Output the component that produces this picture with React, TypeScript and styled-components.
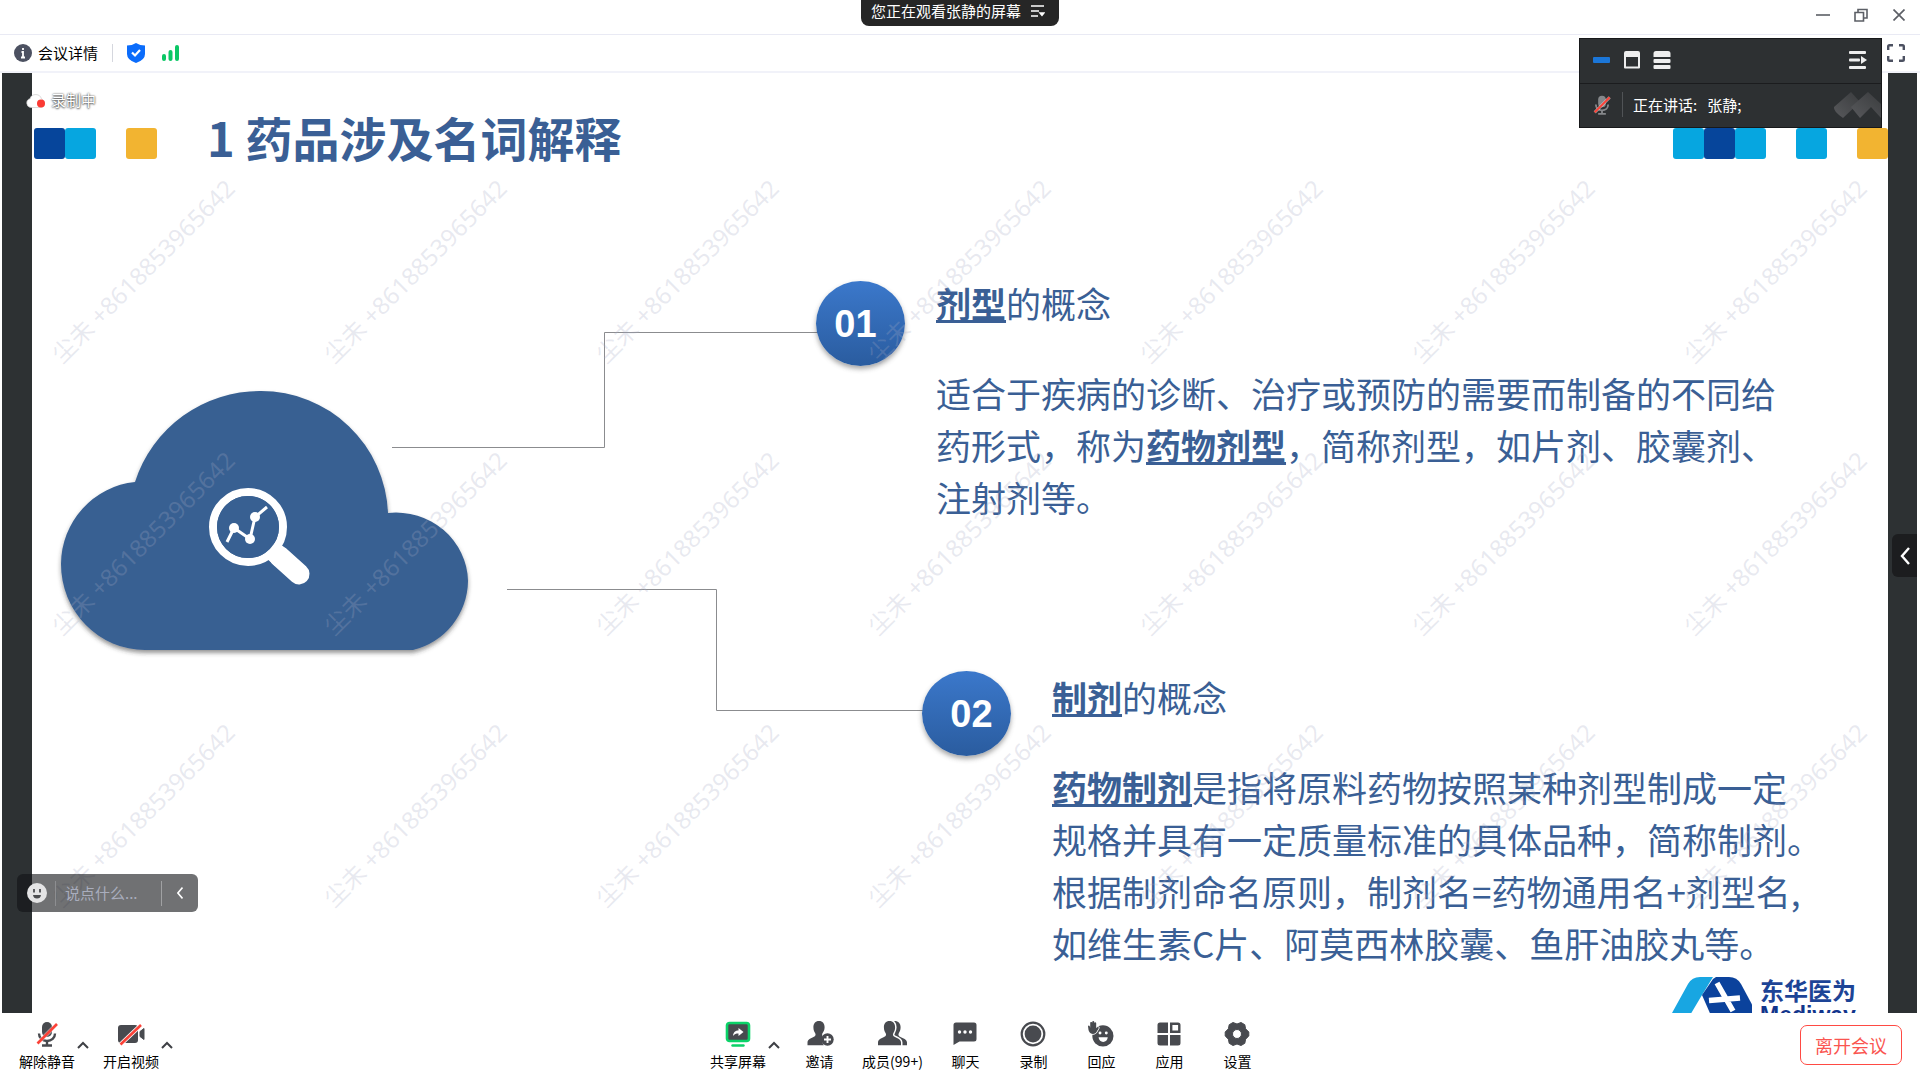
import React from "react";
import styled, { createGlobalStyle } from "styled-components";

const GlobalStyle = createGlobalStyle`
  *, *::before, *::after { box-sizing: border-box; }
  html, body { margin: 0; padding: 0; }
  body {
    background: #fff;
    color: #000;
    font-family: "Noto Sans CJK SC", "Open Sans", sans-serif;
    font-size: 15px;
    line-height: 20px;
  }
  h1, h2, p { margin: 0; }
  button, input { font: inherit; }
  svg { display: block; flex: none; }
`;

/* ---------- shell ---------- */

const Page = styled.div`
  position: relative;
  display: flex;
  flex-direction: column;
  height: 100vh;
  overflow: hidden;
`;

const PlainButton = styled.button`
  display: inline-flex;
  align-items: center;
  justify-content: center;
  padding: 0;
  border: 0;
  background: none;
  color: inherit;
  cursor: pointer;
`;

const TitleBar = styled.header`
  display: grid;
  grid-template-columns: 1fr auto 1fr;
  height: 35px;
  flex: none;
  border-bottom: 1px solid #e9eaf4;
`;

const WatchingTab = styled.button`
  grid-column: 2;
  display: flex;
  align-items: center;
  gap: 10px;
  height: 26px;
  padding: 0 14px 4px 10px;
  border: 0;
  border-radius: 0 0 8px 8px;
  background: #262626;
  color: #fff;
  cursor: pointer;
`;

const WindowControls = styled.div`
  display: flex;
  justify-content: flex-end;
  padding-right: 2px;
  color: #5c5f66;
`;

const WindowButton = styled(PlainButton)`
  width: 38px;
  height: 30px;
`;

const InfoBar = styled.div`
  display: flex;
  align-items: center;
  height: 38px;
  flex: none;
  padding: 0 15px 0 14px;
  border-bottom: 2px solid #f1f2f9;
`;

const DetailsButton = styled(PlainButton)`
  gap: 6px;
`;

const Rule = styled.span<{ $h: number; $color: string }>`
  width: 1px;
  height: ${(p) => p.$h}px;
  background: ${(p) => p.$color};
  flex: none;
`;

const StatusIcons = styled.div`
  display: flex;
  align-items: center;
  gap: 17px;
  margin-left: 14px;
`;

const InfoRule = styled(Rule)`
  margin-left: 14px;
`;

const FullscreenButton = styled(PlainButton)`
  margin-left: auto;
`;

/* ---------- shared screen ---------- */

const Stage = styled.main`
  position: relative;
  flex: 1;
  min-height: 0;
  margin: 0 3px 0 2px;
  padding: 0 29px 0 30px;
  overflow: hidden;
  background: #2d3133;
`;

const Slide = styled.section`
  min-height: 100%;
  background: #fff;
  color: #3a5f95;
`;

const SlideHeader = styled.div`
  display: flex;
  align-items: center;
  padding: 35px 0 0 2px;
  height: 105px;
`;

const Squares = styled.div`
  display: flex;
`;

const Square = styled.span<{ $color: string }>`
  width: 31px;
  height: 31px;
  border-radius: 3px;
  background: ${(p) => p.$color};
`;

const SquareGap = styled.span`
  width: 30px;
`;

const SlideTitle = styled.h1`
  flex: 1;
  padding: 0 0 13px 50px;
  font-size: 47px;
  line-height: 56px;
  font-weight: 700;
`;

const Diagram = styled.div`
  position: relative;
  padding-top: 99px;
`;

const DiagramArt = styled.svg`
  position: absolute;
  left: 0;
  top: 0;
`;

const Concept = styled.article<{ $indent: number; $gap: number; $after: number }>`
  position: relative;
  display: flex;
  align-items: flex-start;
  gap: ${(p) => p.$gap}px;
  margin: 0 0 ${(p) => p.$after}px ${(p) => p.$indent}px;
`;

const NumberBadge = styled.span<{ $shift: number; $drop: number }>`
  display: flex;
  align-items: center;
  justify-content: center;
  flex: none;
  width: 89px;
  height: 85px;
  margin-top: ${(p) => p.$drop}px;
  padding-right: ${(p) => Math.max(0, -p.$shift)}px;
  padding-left: ${(p) => Math.max(0, p.$shift)}px;
  border-radius: 50%;
  background: linear-gradient(#3b78cb, #2a5c9f);
  box-shadow: 0 3px 5px rgba(60, 60, 60, 0.45);
  color: #fff;
  font: 700 38px/40px "Liberation Sans", Arial, sans-serif;
`;

const ConceptText = styled.div`
  font-size: 35px;
  line-height: 52px;
  white-space: nowrap;
`;

const ConceptTitle = styled.h2`
  margin-bottom: 38px;
  font: inherit;
`;

const Line = styled.span`
  display: block;
`;

const Term = styled.strong`
  font-weight: 700;
  text-decoration: underline;
  text-decoration-thickness: 3px;
  text-underline-offset: 2px;
  text-decoration-skip-ink: none;
`;

const SlideFooter = styled.div`
  display: flex;
  justify-content: flex-end;
  gap: 8px;
  padding: 6px 32px 0 0;
`;

const BrandLogo = styled.svg`
  margin-top: 2px;
`;

const BrandName = styled.div`
  color: #1d4496;
  font-size: 24px;
  line-height: 30px;
  font-weight: 700;
`;

const BrandLatin = styled.div`
  color: #12358c;
  font: 700 23px/20px "Liberation Sans", Arial, sans-serif;
`;

const Watermarks = styled.div`
  position: absolute;
  inset: 62px 0 0 5px;
  display: grid;
  grid-template-columns: repeat(auto-fill, 272px);
  grid-auto-rows: 272px;
  overflow: hidden;
  pointer-events: none;
`;

const Watermark = styled.span`
  display: flex;
  align-items: center;
  justify-content: center;
  transform: rotate(-45deg);
  color: rgba(165, 170, 195, 0.26);
  font: 400 24px/32px "Noto Sans", "Noto Sans CJK SC", sans-serif;
  white-space: nowrap;
`;

const Recording = styled.div`
  position: absolute;
  left: 24px;
  top: 17px;
  display: flex;
  align-items: center;
  gap: 6px;
  color: #fff;
  text-shadow: 0 0 2px rgba(0, 0, 0, 0.8), 0 1px 2px rgba(0, 0, 0, 0.5);
`;

const CommentBar = styled.div`
  position: absolute;
  left: 15px;
  bottom: 101px;
  display: flex;
  align-items: center;
  width: 181px;
  height: 38px;
  padding-left: 10px;
  border-radius: 6px;
  background: rgba(17, 18, 21, 0.6);
  color: #fff;
`;

const CommentRule = styled(Rule)`
  margin-left: 8px;
`;

const CommentInput = styled.input`
  flex: 1;
  min-width: 0;
  padding: 0 0 0 9px;
  border: 0;
  outline: 0;
  background: none;
  color: #fff;
  &::placeholder { color: #a9adbd; opacity: 1; }
`;

const CollapseButton = styled(PlainButton)`
  width: 36px;
  height: 38px;
`;

const DrawerHandle = styled(PlainButton)`
  position: absolute;
  right: 0;
  top: 461px;
  width: 25px;
  height: 43px;
  border-radius: 6px 0 0 6px;
  background: #1c1d1f;
  color: #fff;
`;

/* ---------- speaker panel ---------- */

const SpeakerPanel = styled.aside`
  position: absolute;
  top: 38px;
  right: 38px;
  width: 303px;
  border: 1px solid #17181a;
  background: #2d3032;
  color: #fff;
`;

const PanelTools = styled.div`
  display: flex;
  align-items: center;
  gap: 12px;
  height: 45px;
  padding: 0 13px 2px;
  border-bottom: 1px solid #1b1c1e;
`;

const PanelMenu = styled(PlainButton)`
  margin-left: auto;
`;

const SpeakerRow = styled.div`
  display: flex;
  align-items: center;
  gap: 10px;
  height: 43px;
  padding: 0 0 2px 12px;
`;

const SpeakerText = styled.span`
  flex: 1;
  white-space: pre;
`;

/* ---------- toolbar ---------- */

const Toolbar = styled.footer`
  display: grid;
  grid-template-columns: 1fr auto 1fr;
  align-items: start;
  flex: none;
  height: 67px;
  padding: 8px 18px 0 19px;
`;

const ToolGroup = styled.div<{ $inset?: number }>`
  display: flex;
  gap: 14px;
  padding-left: ${(p) => p.$inset ?? 0}px;
`;

const ToolRow = styled.div`
  display: flex;
  gap: 17px;
`;

const ToolWithMenu = styled.div`
  display: flex;
  gap: 2px;
`;

const ToolButton = styled.button`
  display: flex;
  flex-direction: column;
  align-items: center;
  gap: 4px;
  min-width: 51px;
  padding: 0;
  border: 0;
  background: none;
  color: #000;
  font-size: 14px;
  line-height: 20px;
  white-space: nowrap;
  cursor: pointer;
`;

const CaretButton = styled(PlainButton)`
  width: 12px;
  height: 48px;
  color: #3e4045;
`;

const LeaveButton = styled.button`
  justify-self: end;
  width: 102px;
  height: 40px;
  margin-top: 4px;
  padding: 0;
  border: 1px solid #ff4a43;
  border-radius: 7px;
  background: #fff;
  color: #fa5550;
  font-size: 18px;
  line-height: 24px;
  cursor: pointer;
`;

/* ---------- icons ---------- */

const INK = "#484a4f";

const Caret = () => (
  <svg width="12" height="8" viewBox="0 0 12 8" fill="none" stroke="currentColor" strokeWidth="2">
    <path d="M1 7 6 2l5 5" />
  </svg>
);

const MicOff = ({ size = 26, color = INK }: { size?: number; color?: string }) => (
  <svg width={size} height={size} viewBox="0 0 26 26" fill="none">
    <rect x="8" y="1" width="10" height="15" rx="5" fill={color} />
    <path d="M5 12.500c0 4.500 3.500 7.500 8 7.500s8-3 8-7.500" stroke={color} strokeWidth="2.400" />
    <path d="M13 20v4M8 24.500h10" stroke={color} strokeWidth="2.400" />
    <path d="M3.500 22.500 23 3" stroke="#fff" strokeWidth="4" opacity=".5" />
    <path d="M3.500 22.500 23 3" stroke="#fb4238" strokeWidth="2.600" />
  </svg>
);

const CameraOff = () => (
  <svg width="28" height="26" viewBox="0 0 28 26" fill="none">
    <rect x="1" y="4" width="20" height="18" rx="3" fill={INK} />
    <path d="M23 10.500 27 7.500v11l-4-3z" fill={INK} stroke={INK} strokeLinejoin="round" />
    <path d="M3.500 23.500 24 4" stroke="#fff" strokeWidth="4.400" />
    <path d="M3.500 23.500 24 4" stroke="#fb4238" strokeWidth="2.600" />
  </svg>
);

const ShareScreen = () => (
  <svg width="26" height="26" viewBox="0 0 26 26" fill="none">
    <rect x="2" y="2" width="22" height="18" rx="2.500" fill={INK} stroke="#0bd268" strokeWidth="2.600" />
    <path d="M8 15c.4-4 2.400-5.500 5.500-5.500V7l5 4-5 4v-2.500c-2.500 0-4 .5-5.500 2.500Z" fill="#fff" />
    <path d="M7.500 24.500h11" stroke="#0bd268" strokeWidth="2.400" strokeLinecap="round" />
  </svg>
);

const Invite = () => (
  <svg width="28" height="26" viewBox="0 0 28 26">
    <path d="M13 0c3.700 0 5.600 2.700 5.600 6.200 0 2.800-1.200 4.600-2 5.800-.6 1-.6 2.500 0 3.300-1.200 3.200-.6 6.700 1.200 9H1.500v-2.800c0-3 3.500-4.400 6-5.500 2.200-1 2.500-2.200 1.600-4-.8-1.300-1.700-3-1.700-5.800C7.400 2.700 9.300 0 13 0Z" fill={INK} />
    <circle cx="21.500" cy="18.500" r="6.200" fill={INK} />
    <path d="M21.500 15v7M18 18.500h7" stroke="#fff" strokeWidth="1.900" />
  </svg>
);

const Members = () => (
  <svg width="30" height="26" viewBox="0 0 30 26">
    <path d="M16.500 0c4 0 6.100 2.700 6.100 6.200 0 2.800-1 4.500-1.700 5.800-.9 1.800-.6 3 1.600 4 2.500 1.100 6.500 2.500 6.500 5.500v2.800H16V0Z" fill={INK} />
    <path
      d="M11.500 0c3.700 0 5.600 2.700 5.600 6.200 0 2.800-1 4.500-1.700 5.800-.9 1.800-.6 3 1.600 4 2.500 1.100 6 2.500 6 5.500v2.800H0v-2.800c0-3 3.500-4.400 6-5.500 2.200-1 2.500-2.200 1.600-4C6.800 10.700 5.900 9 5.900 6.200 5.900 2.700 7.800 0 11.500 0Z"
      fill={INK}
      stroke="#fff"
      strokeWidth="3"
      paintOrder="stroke"
    />
  </svg>
);

const Chat = () => (
  <svg width="26" height="26" viewBox="0 0 26 26">
    <path d="M4 1.500h18a2.500 2.500 0 0 1 2.500 2.500v14a2.500 2.500 0 0 1-2.500 2.500H7.500L1.500 24V4A2.500 2.500 0 0 1 4 1.500Z" fill={INK} />
    <g fill="#fff"><circle cx="7.500" cy="11" r="1.700" /><circle cx="13" cy="11" r="1.700" /><circle cx="18.500" cy="11" r="1.700" /></g>
  </svg>
);

const Record = () => (
  <svg width="26" height="26" viewBox="0 0 26 26">
    <circle cx="13" cy="13" r="11.300" fill="#fff" stroke={INK} strokeWidth="2.200" />
    <circle cx="13" cy="13" r="8.400" fill={INK} />
  </svg>
);

const Wave = () => (
  <svg width="28" height="26" viewBox="0 0 28 27">
    <circle cx="16" cy="15.500" r="11" fill={INK} />
    <path d="M.5 5.500c0-1 1.300-1.200 1.700-.2L2.800 7V2c0-1.300 2-1.300 2.100 0V.900C5.100-.2 6.800-.2 7 .900V2c.2-1.100 1.900-1.100 2 .1v5.500c.8-1.200 1.700-1.600 2.400-1.200.6.400.4 1-.1 1.700-1.600 2.600-2.200 5.400-5.600 5.400C2.500 13.500 1.500 11 1 9.200Z" fill={INK} stroke="#fff" strokeWidth="1.600" paintOrder="stroke" />
    <g fill="#fff"><circle cx="13" cy="12.500" r="1.500" /><circle cx="19.500" cy="12.500" r="1.500" /></g>
    <path d="M11.500 17h9.500c-.3 3.200-2.200 4.800-4.700 4.800s-4.500-1.600-4.800-4.800Z" fill="#fff" />
  </svg>
);

const Apps = () => (
  <svg width="26" height="26" viewBox="0 0 26 26" fill={INK}>
    <path d="M4 1.500h8v10.500H1.500V4A2.500 2.500 0 0 1 4 1.500ZM1.500 14H12v10.500H4A2.500 2.500 0 0 1 1.500 22ZM14 14h10.500v8a2.500 2.500 0 0 1-2.500 2.500h-8Z" />
    <path d="M15.200 2.700h6.800a1.300 1.300 0 0 1 1.300 1.300v6.800h-8.100Z" fill="none" stroke={INK} strokeWidth="2.400" />
  </svg>
);

const Settings = () => (
  <svg width="26" height="26" viewBox="0 0 26 26">
    <path
      fill={INK}
      fillRule="evenodd"
      d="M9 1.500 13 3l4-1.500 3.800 2.200.8 4.100L24.800 11v4l-3.200 3.200-.8 4.100-3.800 2.200L13 23l-4 1.500-3.800-2.200-.8-4.100L1.200 15v-4l3.200-3.200.8-4.100ZM13 8.500a4.500 4.500 0 1 0 0 9 4.500 4.500 0 0 0 0-9Z"
      stroke={INK}
      strokeLinejoin="round"
    />
  </svg>
);

const CloudArt = () => (
  <DiagramArt width="900" height="560" viewBox="32 178 900 560" fill="none" aria-hidden="true">
    <defs>
      <filter id="cloudShadow" x="-5%" y="-5%" width="110%" height="115%">
        <feDropShadow dx="0" dy="3" stdDeviation="2" floodColor="#333" floodOpacity=".5" />
      </filter>
    </defs>
    <path
      d="M145 650A84 86 0 0 1 61 564A82 83 0 0 1 135 482A131 131 0 0 1 261 391A127 127 0 0 1 388 513A72 70 0 0 1 468 581A72 72 0 0 1 413 650Z"
      fill="#386092"
      filter="url(#cloudShadow)"
    />
    <circle cx="248" cy="527" r="35" stroke="#fff" strokeWidth="8" />
    <path d="m279 556 20 18" stroke="#fff" strokeWidth="21" strokeLinecap="round" />
    <path d="m270 548 12 11" stroke="#fff" strokeWidth="20" />
    <circle cx="248" cy="527" r="31" fill="#386092" />
    <path d="m227 542 7-14 16 11 5-22 12-10" stroke="#fff" strokeWidth="3" />
    <g fill="#fff"><circle cx="234" cy="528" r="5" /><circle cx="250" cy="539" r="5" /><circle cx="255" cy="517" r="5" /></g>
    <path d="M392 447.500H604.500V332.500H820M507 589.500H716.500V710.500H926" stroke="#8b8c8f" />
  </DiagramArt>
);

const BrandMark = () => (
  <BrandLogo width="81" height="50" viewBox="0 0 81 50">
    <path d="M1 36 17 7Q21 0 29 0h13L31 18 12 50H-7Z" fill="#18a6e2" />
    <path d="M45 0h13q8 0 12 7l23 43H45L31 18 42 2Z" fill="#0b429c" />
    <path d="M46 6 62 34M38 23.500 69 21" stroke="#fff" strokeWidth="5.500" fill="none" />
  </BrandLogo>
);

const tools = [
  { label: "邀请", icon: <Invite /> },
  { label: "成员(99+)", icon: <Members /> },
  { label: "聊天", icon: <Chat /> },
  { label: "录制", icon: <Record /> },
  { label: "回应", icon: <Wave /> },
  { label: "应用", icon: <Apps /> },
  { label: "设置", icon: <Settings /> },
];

const NAVY = "#06459b";
const CYAN = "#06a6e0";
const AMBER = "#f2b431";

export default function App() {
  return (
    <Page>
      <GlobalStyle />

      <TitleBar>
        <WatchingTab>
          您正在观看张静的屏幕
          <svg width="14" height="12" viewBox="0 0 14 12" fill="none" stroke="#fff" strokeWidth="1.400">
            <path d="M0 1h13M0 6h8M0 11h7" />
            <path d="m9 8 2 2.500L13 8Z" fill="#fff" />
          </svg>
        </WatchingTab>
        <WindowControls>
          <WindowButton aria-label="最小化">
            <svg width="14" height="14" viewBox="0 0 14 14" stroke="currentColor" strokeWidth="1.600"><path d="M0 7h14" /></svg>
          </WindowButton>
          <WindowButton aria-label="还原">
            <svg width="14" height="14" viewBox="0 0 14 14" fill="none" stroke="currentColor" strokeWidth="1.600">
              <path d="M1 4.500h8.500V13H1ZM4 4.500V1.500h9V10H9.500" />
            </svg>
          </WindowButton>
          <WindowButton aria-label="关闭">
            <svg width="12" height="12" viewBox="0 0 12 12" stroke="currentColor" strokeWidth="1.700"><path d="m.5.5 11 11m0-11-11 11" /></svg>
          </WindowButton>
        </WindowControls>
      </TitleBar>

      <InfoBar>
        <DetailsButton>
          <svg width="18" height="18" viewBox="0 0 18 18">
            <circle cx="9" cy="9" r="9" fill="#4c5161" />
            <path d="M9 4v2M7.500 8H9v5.500M7 13.500h4" stroke="#fff" strokeWidth="1.800" fill="none" />
          </svg>
          会议详情
        </DetailsButton>
        <InfoRule $h={18} $color="#d5d7de" />
        <StatusIcons>
          <svg width="18" height="20" viewBox="0 0 18 20">
            <path d="M9 0q4 2.500 9 2.500V11q0 6-9 9-9-3-9-9V2.500Q5 2.500 9 0Z" fill="#0b6cfb" />
            <path d="m5 9.500 3 3 5-5.500" stroke="#fff" strokeWidth="2.200" fill="none" />
          </svg>
          <svg width="17" height="16" viewBox="0 0 17 16" stroke="#0bc765" strokeWidth="4" strokeLinecap="round">
            <path d="M2 11v3M8.500 7v7M15 2v12" />
          </svg>
        </StatusIcons>
        <FullscreenButton aria-label="全屏">
          <svg width="18" height="18" viewBox="0 0 18 18" fill="none" stroke="#4c5161" strokeWidth="2.400">
            <path d="M1.200 6V2.500q0-1.300 1.300-1.300H6M12 1.200h3.500q1.300 0 1.300 1.300V6M16.800 12v3.500q0 1.300-1.300 1.300H12M6 16.800H2.500q-1.300 0-1.300-1.300V12" />
          </svg>
        </FullscreenButton>
      </InfoBar>

      <Stage>
        <Slide>
          <SlideHeader>
            <Squares>
              <Square $color={NAVY} />
              <Square $color={CYAN} />
              <SquareGap />
              <Square $color={AMBER} />
            </Squares>
            <SlideTitle>1 药品涉及名词解释</SlideTitle>
            <Squares>
              <Square $color={CYAN} />
              <Square $color={NAVY} />
              <Square $color={CYAN} />
              <SquareGap />
              <Square $color={CYAN} />
              <SquareGap />
              <Square $color={AMBER} />
            </Squares>
          </SlideHeader>

          <Diagram>
            <CloudArt />
            <Concept $indent={784} $gap={31} $after={148}>
              <NumberBadge $shift={-10} $drop={4}>01</NumberBadge>
              <ConceptText>
                <ConceptTitle><Term>剂型</Term>的概念</ConceptTitle>
                <p>
                  <Line>适合于疾病的诊断、治疗或预防的需要而制备的不同给</Line>
                  <Line>药形式，称为<Term>药物剂型</Term>，简称剂型，如片剂、胶囊剂、</Line>
                  <Line>注射剂等。</Line>
                </p>
              </ConceptText>
            </Concept>
            <Concept $indent={890} $gap={41} $after={0}>
              <NumberBadge $shift={10} $drop={0}>02</NumberBadge>
              <ConceptText>
                <ConceptTitle><Term>制剂</Term>的概念</ConceptTitle>
                <p>
                  <Line><Term>药物制剂</Term>是指将原料药物按照某种剂型制成一定</Line>
                  <Line>规格并具有一定质量标准的具体品种，简称制剂。</Line>
                  <Line>根据制剂命名原则，制剂名=药物通用名+剂型名,</Line>
                  <Line>如维生素C片、阿莫西林胶囊、鱼肝油胶丸等。</Line>
                </p>
              </ConceptText>
            </Concept>
          </Diagram>

          <SlideFooter>
            <BrandMark />
            <div>
              <BrandName>东华医为</BrandName>
              <BrandLatin>Mediway</BrandLatin>
            </div>
          </SlideFooter>
        </Slide>

        <Watermarks>
          {Array.from({ length: 21 }, (_, i) => (
            <Watermark key={i}>尘未 +8618853965642</Watermark>
          ))}
        </Watermarks>

        <Recording>
          <svg width="19" height="17" viewBox="0 0 19 17">
            <path d="M5 15.500a4.500 4.500 0 0 1-1-8.800A6 6 0 0 1 15.500 7c2 .8 3 2.300 3 4.300s-1.500 4.200-4 4.200Z" fill="#fff" stroke="#ccc" strokeWidth=".7" />
            <circle cx="15" cy="11.500" r="4" fill="#fb3b34" />
          </svg>
          录制中
        </Recording>

        <CommentBar>
          <PlainButton aria-label="表情">
            <svg width="20" height="20" viewBox="0 0 20 20">
              <circle cx="10" cy="10" r="10" fill="#e4e4e5" />
              <path d="M7 6v3.500M13 6v3.500" stroke="#4c4d50" strokeWidth="1.800" />
              <path d="M6 12h8q-.5 3.500-4 3.500T6 12Z" fill="#4c4d50" />
            </svg>
          </PlainButton>
          <CommentRule $h={25} $color="#8d8e91" />
          <CommentInput aria-label="说点什么" placeholder="说点什么..." />
          <Rule $h={25} $color="#a0a1a3" />
          <CollapseButton aria-label="收起">
            <svg width="6" height="12" viewBox="0 0 6 12" fill="none" stroke="#fff" strokeWidth="1.600"><path d="M5.500.5.900 6l4.600 5.500" /></svg>
          </CollapseButton>
        </CommentBar>

        <DrawerHandle aria-label="展开侧栏">
          <svg width="10" height="18" viewBox="0 0 10 18" fill="none" stroke="currentColor" strokeWidth="2.400"><path d="M9 1 2 9l7 8" /></svg>
        </DrawerHandle>
      </Stage>

      <Toolbar>
        <ToolGroup>
          <ToolWithMenu>
            <ToolButton><MicOff />解除静音</ToolButton>
            <CaretButton aria-label="音频选项"><Caret /></CaretButton>
          </ToolWithMenu>
          <ToolWithMenu>
            <ToolButton><CameraOff />开启视频</ToolButton>
            <CaretButton aria-label="视频选项"><Caret /></CaretButton>
          </ToolWithMenu>
        </ToolGroup>
        <ToolGroup $inset={52}>
          <ToolWithMenu>
            <ToolButton><ShareScreen />共享屏幕</ToolButton>
            <CaretButton aria-label="共享选项"><Caret /></CaretButton>
          </ToolWithMenu>
          <ToolRow>
            {tools.map((t) => (
              <ToolButton key={t.label}>{t.icon}{t.label}</ToolButton>
            ))}
          </ToolRow>
        </ToolGroup>
        <LeaveButton>离开会议</LeaveButton>
      </Toolbar>

      <SpeakerPanel>
        <PanelTools>
          <PlainButton aria-label="隐藏画面">
            <svg width="18" height="20" viewBox="0 0 18 20"><rect y="7" width="17" height="6" rx="1" fill="#1b76d8" /></svg>
          </PlainButton>
          <PlainButton aria-label="单个画面">
            <svg width="18" height="20" viewBox="0 0 18 20">
              <path d="M3 1h12a2 2 0 0 1 2 2v14.500a1 1 0 0 1-1 1H2a1 1 0 0 1-1-1V3a2 2 0 0 1 2-2ZM3 7v9.500h12V7Z" fill="#eee" fillRule="evenodd" />
            </svg>
          </PlainButton>
          <PlainButton aria-label="多个画面">
            <svg width="18" height="20" viewBox="0 0 18 20" fill="#eee">
              <path d="M3 1h12a2.500 2.500 0 0 1 2.500 2.500V7H.5V3.500A2.500 2.500 0 0 1 3 1Z" />
              <rect x=".5" y="9" width="17" height="4" rx="1" />
              <rect x=".5" y="15" width="17" height="4" rx="1" />
            </svg>
          </PlainButton>
          <PanelMenu aria-label="布局">
            <svg width="20" height="20" viewBox="0 0 20 20" fill="#eee">
              <rect x="1" y="1" width="17" height="3" rx="1" />
              <rect x="1" y="8.500" width="11" height="3" rx="1" />
              <rect x="1" y="16" width="17" height="3" rx="1" />
              <path d="m13 6 6 4-6 4Z" />
            </svg>
          </PanelMenu>
        </PanelTools>
        <SpeakerRow>
          <MicOff size={20} color="#85878a" />
          <Rule $h={25} $color="#505356" />
          <SpeakerText>{"正在讲话:   张静;"}</SpeakerText>
          <svg width="48" height="30" viewBox="0 0 48 30">
            <defs>
              <linearGradient id="peak" x1="1" y1="0" x2="0" y2="1">
                <stop offset="0" stopColor="#3a3c3e" />
                <stop offset="1" stopColor="#58595c" />
              </linearGradient>
            </defs>
            <path d="M1 17 18 2l9 10-17 16Q0 21 1 17Z" fill="url(#peak)" />
            <path d="m18 17 17-15 13 12v14L38 17 27 28Z" fill="url(#peak)" />
          </svg>
        </SpeakerRow>
      </SpeakerPanel>
    </Page>
  );
}
